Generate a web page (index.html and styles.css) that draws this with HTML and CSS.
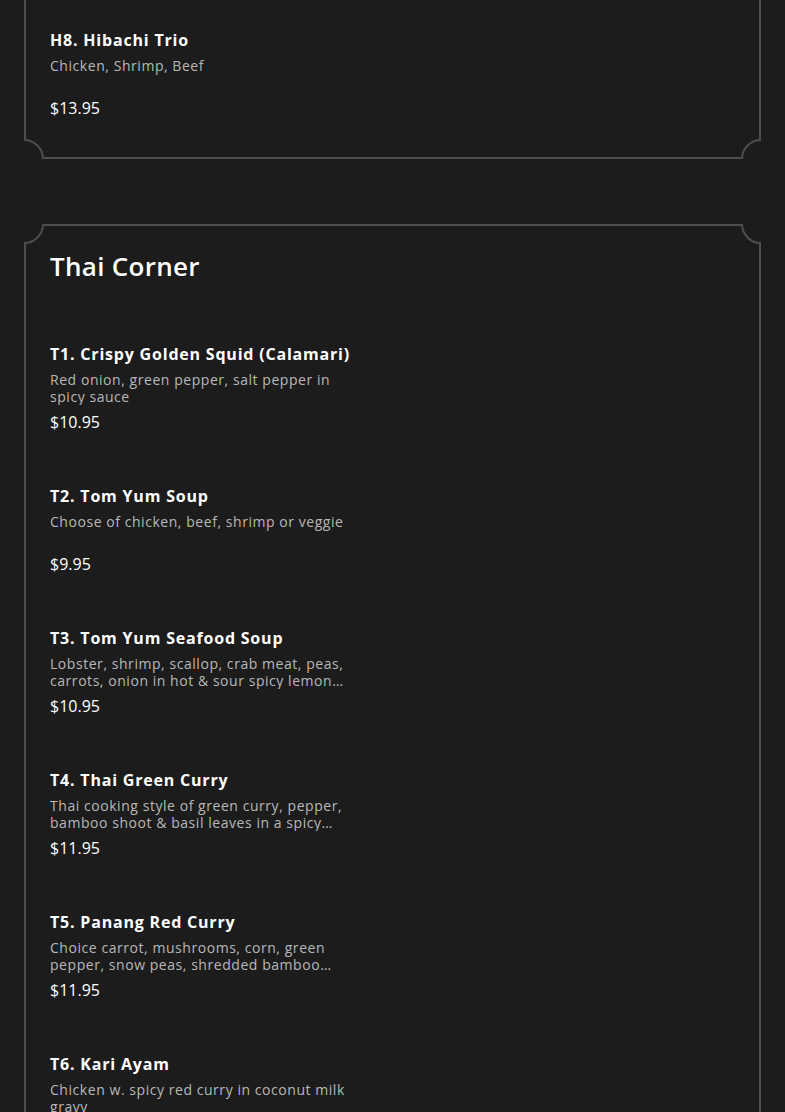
FILE: index.html
```html
<!DOCTYPE html>
<html lang="en">
<head>
<meta charset="utf-8">
<title>Menu</title>
<link rel="stylesheet" href="styles.css">
</head>
<body>
<main class="menu">
  <section class="card card--cut">
    <div class="items">
      <article class="item">
        <h3 class="item-title">H8. Hibachi Trio</h3>
        <p class="item-desc">Chicken, Shrimp, Beef</p>
        <p class="item-price">$13.95</p>
      </article>
    </div>
    <svg class="corner corner--bl" width="20" height="20" viewBox="0 0 20 20"><path d="M0 1 A19 19 0 0 1 19 20"/></svg>
    <svg class="corner corner--br" width="20" height="20" viewBox="0 0 20 20"><path d="M20 1 A19 19 0 0 0 1 20"/></svg>
  </section>

  <section class="card">
    <h2 class="card-title">Thai Corner</h2>
    <div class="items">
      <article class="item">
        <h3 class="item-title">T1. Crispy Golden Squid (Calamari)</h3>
        <p class="item-desc">Red onion, green pepper, salt pepper in spicy sauce</p>
        <p class="item-price">$10.95</p>
      </article>
      <article class="item">
        <h3 class="item-title">T2. Tom Yum Soup</h3>
        <p class="item-desc">Choose of chicken, beef, shrimp or veggie</p>
        <p class="item-price">$9.95</p>
      </article>
      <article class="item">
        <h3 class="item-title">T3. Tom Yum Seafood Soup</h3>
        <p class="item-desc">Lobster, shrimp, scallop, crab meat, peas, carrots, onion in hot &amp; sour spicy lemon grass broth</p>
        <p class="item-price">$10.95</p>
      </article>
      <article class="item">
        <h3 class="item-title">T4. Thai Green Curry</h3>
        <p class="item-desc">Thai cooking style of green curry, pepper, bamboo shoot &amp; basil leaves in a spicy coconut milk sauce</p>
        <p class="item-price">$11.95</p>
      </article>
      <article class="item">
        <h3 class="item-title">T5. Panang Red Curry</h3>
        <p class="item-desc">Choice carrot, mushrooms, corn, green pepper, snow peas, shredded bamboo shoot in red curry sauce</p>
        <p class="item-price">$11.95</p>
      </article>
      <article class="item">
        <h3 class="item-title">T6. Kari Ayam</h3>
        <p class="item-desc">Chicken w. spicy red curry in coconut milk gravy</p>
        <p class="item-price">$11.95</p>
      </article>
    </div>
    <svg class="corner corner--tl" width="20" height="20" viewBox="0 0 20 20"><path d="M19 0 A19 19 0 0 1 0 19"/></svg>
    <svg class="corner corner--tr" width="20" height="20" viewBox="0 0 20 20"><path d="M1 0 A19 19 0 0 0 20 19"/></svg>
  </section>
</main>
</body>
</html>
```

FILE: styles.css
```css
* { box-sizing: border-box; }

html, body {
  margin: 0;
  padding: 0;
  background: #1c1c1c;
}

body {
  font-family: "Open Sans", "DejaVu Sans", sans-serif;
  color: #ffffff;
  overflow: hidden;
}

.menu {
  padding: 0 24px;
  display: flex;
  flex-direction: column;
  gap: 65px;
}

.card {
  position: relative;
  border: 2px solid #4e4e4e;
  padding: 24px 24px 39px 24px;
}

.card--cut {
  border-top: none;
  padding-top: 30px;
}

.card-title {
  margin: 0 0 62px 0;
  font-size: 26px;
  line-height: 32px;
  font-weight: 600;
  letter-spacing: 0.3px;
}

.items {
  display: flex;
  flex-direction: column;
  gap: 54px;
}

.item {
  width: 302px;
}

.item-title {
  margin: 0;
  font-size: 16px;
  line-height: 20px;
  font-weight: 700;
  white-space: nowrap;
  letter-spacing: 0.8px;
}

.item-desc {
  margin: 7px 0 7px 0;
  font-size: 14px;
  line-height: 17px;
  height: 34px;
  color: #b8b8b8;
  font-weight: 400;
  letter-spacing: 0.55px;
  display: -webkit-box;
  -webkit-box-orient: vertical;
  -webkit-line-clamp: 2;
  overflow: hidden;
}

.item-price {
  margin: 0;
  font-size: 16px;
  line-height: 20px;
  font-weight: 400;
}

/* concave notched corners drawn over the frame */
.corner {
  position: absolute;
  display: block;
  background: #1c1c1c;
  fill: none;
  stroke: #4e4e4e;
  stroke-width: 2;
}

.corner--tl { top: -2px; left: -2px; }
.corner--tr { top: -2px; right: -2px; }
.corner--bl { bottom: -2px; left: -2px; }
.corner--br { bottom: -2px; right: -2px; }
```
